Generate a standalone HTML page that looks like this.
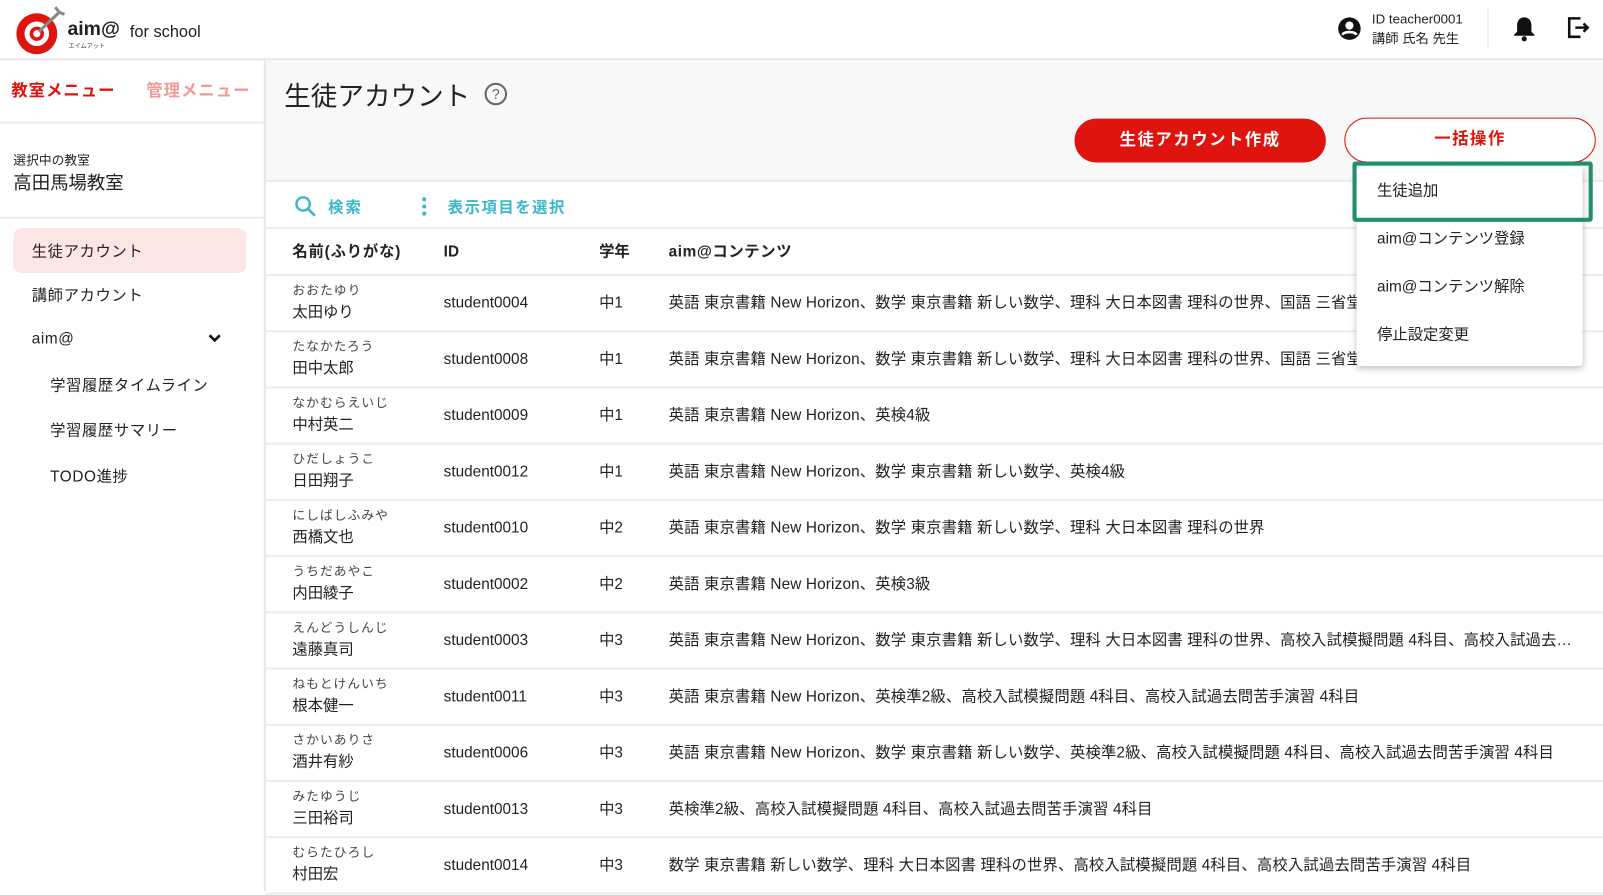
<!DOCTYPE html>
<html><head><meta charset="utf-8"><style>
*{box-sizing:border-box;margin:0;padding:0}
html,body{width:1603px;height:891px;overflow:hidden;background:#fff}
#wrap{position:absolute;left:0;top:0;width:1568px;height:872px;transform:scale(1.0223);transform-origin:0 0;font-family:"Liberation Sans","Noto Sans CJK JP",sans-serif;color:#222}
.abs{position:absolute}
.hdr{left:0;top:0;width:1568px;height:59px;border-bottom:2px solid #e6e6e6;background:#fff}
.side{left:0;top:59px;width:260px;height:813px;border-right:2px solid #e6e6e6;background:#fff}
.main{left:260px;top:59px;width:1308px;height:119px;background:#f8f8f8;border-bottom:2px solid #ececec}
.row{position:absolute;left:260px;width:1308px;height:55px;border-bottom:2px solid #ececec;font-size:15px;line-height:20px}
.row .k{position:absolute;left:26px;top:6px;font-size:12.5px;color:#444;letter-spacing:1px;line-height:16px}
.row .n{position:absolute;left:26px;top:26px;font-size:15px}
.row .i{position:absolute;left:174px;top:17px}
.row .g{position:absolute;left:326px;top:17px}
.row .c{position:absolute;left:394px;top:17px;white-space:nowrap;width:892px;overflow:hidden;text-overflow:ellipsis;letter-spacing:0.15px}
.nav{position:absolute;font-size:15px;letter-spacing:0.6px}
.dd div{height:47px;line-height:47px;padding-left:20px;font-size:15px}
</style></head><body><div id="wrap">
<div class="abs hdr">
 <svg class="abs" style="left:14px;top:4px" width="52" height="50" viewBox="0 0 52 50"><circle cx="22" cy="29" r="20" fill="#e0140f"/><circle cx="22" cy="29" r="12" fill="#fff"/><circle cx="22" cy="29" r="7" fill="#e0140f"/><circle cx="22" cy="29" r="3.5" fill="#fff"/><path d="M24 27 L44 8" stroke="#888" stroke-width="3"/><path d="M40 3 L44 8 L49 10" stroke="#888" stroke-width="3" fill="none"/></svg>
 <div class="abs" style="left:66px;top:18px;font-size:19px;font-weight:bold;color:#222">aim@</div>
 <div class="abs" style="left:67px;top:40px;font-size:6px;color:#444">エイムアット</div>
 <div class="abs" style="left:127px;top:23px;font-size:16px">for school</div>
 <svg class="abs" style="left:1308px;top:16px" width="24" height="24" viewBox="0 0 24 24"><circle cx="12" cy="12" r="11" fill="#111"/><circle cx="12" cy="9" r="4" fill="#fff"/><path d="M5 18c2-3.5 12-3.5 14 0" stroke="#fff" stroke-width="2.5" fill="none"/></svg>
 <div class="abs" style="left:1342px;top:9px;font-size:13px;line-height:19px">ID teacher0001<br>講師 氏名 先生</div>
 <div class="abs" style="left:1455px;top:8px;width:1px;height:40px;background:#e6e6e6"></div>
 <svg class="abs" style="left:1479px;top:15px" width="24" height="26" viewBox="0 0 24 26"><path d="M12 2c-5 0-7 4-7 8v6l-3 3v1h20v-1l-3-3v-6c0-4-2-8-7-8z" fill="#111"/><circle cx="12" cy="23" r="2.5" fill="#111"/></svg>
 <svg class="abs" style="left:1532px;top:15px" width="24" height="24" viewBox="0 0 24 24"><path d="M14 3H3v18h11" stroke="#111" stroke-width="2.5" fill="none"/><path d="M9 12h12M17 8l4 4-4 4" stroke="#111" stroke-width="2.5" fill="none"/></svg>
</div>
<div class="abs side">
 <div class="abs" style="left:11px;top:16px;font-size:16px;font-weight:bold;color:#e0140f;letter-spacing:1px">教室メニュー</div>
 <div class="abs" style="left:143px;top:16px;font-size:16px;font-weight:bold;color:#f19a97;letter-spacing:1px">管理メニュー</div>
 <div class="abs" style="left:0;top:60px;width:258px;height:2px;background:#ececec"></div>
 <div class="abs" style="left:13px;top:87px;font-size:12.5px">選択中の教室</div>
 <div class="abs" style="left:13px;top:106px;font-size:18px">高田馬場教室</div>
 <div class="abs" style="left:0;top:153px;width:258px;height:2px;background:#ececec"></div>
 <div class="abs" style="left:13px;top:164px;width:228px;height:44px;border-radius:8px;background:#fce6e5"></div>
 <div class="nav" style="left:31px;top:176px">生徒アカウント</div>
 <div class="nav" style="left:31px;top:219px">講師アカウント</div>
 <div class="nav" style="left:31px;top:264px">aim@</div>
 <svg class="abs" style="left:203px;top:267px" width="14" height="10" viewBox="0 0 14 10"><path d="M2 2l5 5 5-5" stroke="#111" stroke-width="2.5" fill="none"/></svg>
 <div class="nav" style="left:49px;top:307px">学習履歴タイムライン</div>
 <div class="nav" style="left:49px;top:351px">学習履歴サマリー</div>
 <div class="nav" style="left:49px;top:396px">TODO進捗</div>
</div>
<div class="abs main">
 <div class="abs" style="left:18px;top:15px;font-size:26px">生徒アカウント</div>
 <svg class="abs" style="left:213px;top:21px" width="24" height="24" viewBox="0 0 24 24"><circle cx="12" cy="12" r="10" stroke="#666" stroke-width="2" fill="none"/><text x="12" y="17" text-anchor="middle" font-size="14" fill="#666" font-family="Liberation Sans">?</text></svg>
 <div class="abs" style="left:791px;top:57px;width:246px;height:43px;border-radius:22px;background:#e0140f;color:#fff;font-weight:bold;font-size:16px;text-align:center;line-height:43px;letter-spacing:1.5px">生徒アカウント作成</div>
 <div class="abs" style="left:1055px;top:56px;width:246px;height:44px;border-radius:22px;background:#fff;border:1.5px solid #e0140f;color:#e0140f;font-weight:bold;font-size:16px;text-align:center;line-height:41px;letter-spacing:1.5px">一括操作</div>
</div>
<svg class="abs" style="left:288px;top:191px" width="22" height="22" viewBox="0 0 22 22"><circle cx="8.5" cy="8.5" r="6.5" stroke="#3cb7c9" stroke-width="2.4" fill="none"/><path d="M13 13l7 7" stroke="#3cb7c9" stroke-width="2.6"/></svg>
<div class="abs" style="left:321px;top:192px;font-size:15px;font-weight:bold;color:#3cb7c9;letter-spacing:2px">検索</div>
<svg class="abs" style="left:411px;top:192px" width="8" height="20"><circle cx="4" cy="3" r="2" fill="#3cb7c9"/><circle cx="4" cy="10" r="2" fill="#3cb7c9"/><circle cx="4" cy="17" r="2" fill="#3cb7c9"/></svg>
<div class="abs" style="left:438px;top:192px;font-size:15px;font-weight:bold;color:#3cb7c9;letter-spacing:1.5px">表示項目を選択</div>
<div class="abs" style="left:260px;top:222px;width:1308px;height:2px;background:#ececec"></div>
<div class="row" style="top:224px;height:46px;font-weight:bold">
 <div class="abs" style="left:26px;top:13px;letter-spacing:0.8px">名前(ふりがな)</div><div class="abs" style="left:174px;top:13px">ID</div><div class="abs" style="left:326px;top:13px">学年</div><div class="abs" style="left:394px;top:13px;letter-spacing:0.6px">aim@コンテンツ</div>
</div>
<div class="row" style="top:270px"><div class="k">おおたゆり</div><div class="n">太田ゆり</div><div class="i">student0004</div><div class="g">中1</div><div class="c">英語 東京書籍 New Horizon、数学 東京書籍 新しい数学、理科 大日本図書 理科の世界、国語 三省堂 現代の国語、社会 東京書籍</div></div>
<div class="row" style="top:325px"><div class="k">たなかたろう</div><div class="n">田中太郎</div><div class="i">student0008</div><div class="g">中1</div><div class="c">英語 東京書籍 New Horizon、数学 東京書籍 新しい数学、理科 大日本図書 理科の世界、国語 三省堂 現代の国語、社会 東京書籍</div></div>
<div class="row" style="top:380px"><div class="k">なかむらえいじ</div><div class="n">中村英二</div><div class="i">student0009</div><div class="g">中1</div><div class="c">英語 東京書籍 New Horizon、英検4級</div></div>
<div class="row" style="top:435px"><div class="k">ひだしょうこ</div><div class="n">日田翔子</div><div class="i">student0012</div><div class="g">中1</div><div class="c">英語 東京書籍 New Horizon、数学 東京書籍 新しい数学、英検4級</div></div>
<div class="row" style="top:490px"><div class="k">にしばしふみや</div><div class="n">西橋文也</div><div class="i">student0010</div><div class="g">中2</div><div class="c">英語 東京書籍 New Horizon、数学 東京書籍 新しい数学、理科 大日本図書 理科の世界</div></div>
<div class="row" style="top:545px"><div class="k">うちだあやこ</div><div class="n">内田綾子</div><div class="i">student0002</div><div class="g">中2</div><div class="c">英語 東京書籍 New Horizon、英検3級</div></div>
<div class="row" style="top:600px"><div class="k">えんどうしんじ</div><div class="n">遠藤真司</div><div class="i">student0003</div><div class="g">中3</div><div class="c">英語 東京書籍 New Horizon、数学 東京書籍 新しい数学、理科 大日本図書 理科の世界、高校入試模擬問題 4科目、高校入試過去問苦手演習 4科目</div></div>
<div class="row" style="top:655px"><div class="k">ねもとけんいち</div><div class="n">根本健一</div><div class="i">student0011</div><div class="g">中3</div><div class="c">英語 東京書籍 New Horizon、英検準2級、高校入試模擬問題 4科目、高校入試過去問苦手演習 4科目</div></div>
<div class="row" style="top:710px"><div class="k">さかいありさ</div><div class="n">酒井有紗</div><div class="i">student0006</div><div class="g">中3</div><div class="c" style="overflow:visible">英語 東京書籍 New Horizon、数学 東京書籍 新しい数学、英検準2級、高校入試模擬問題 4科目、高校入試過去問苦手演習 4科目</div></div>
<div class="row" style="top:765px"><div class="k">みたゆうじ</div><div class="n">三田裕司</div><div class="i">student0013</div><div class="g">中3</div><div class="c">英検準2級、高校入試模擬問題 4科目、高校入試過去問苦手演習 4科目</div></div>
<div class="row" style="top:820px"><div class="k">むらたひろし</div><div class="n">村田宏</div><div class="i">student0014</div><div class="g">中3</div><div class="c">数学 東京書籍 新しい数学、理科 大日本図書 理科の世界、高校入試模擬問題 4科目、高校入試過去問苦手演習 4科目</div></div>
<div class="abs dd" style="left:1327px;top:163px;width:221px;height:195px;background:#fff;box-shadow:0 2px 6px rgba(0,0,0,.25);border-radius:3px">
 <div>生徒追加</div><div>aim@コンテンツ登録</div><div>aim@コンテンツ解除</div><div>停止設定変更</div>
</div>
<div class="abs" style="left:1323px;top:158px;width:235px;height:59px;border:4px solid #21906a;border-radius:3px"></div>
</div></body></html>
